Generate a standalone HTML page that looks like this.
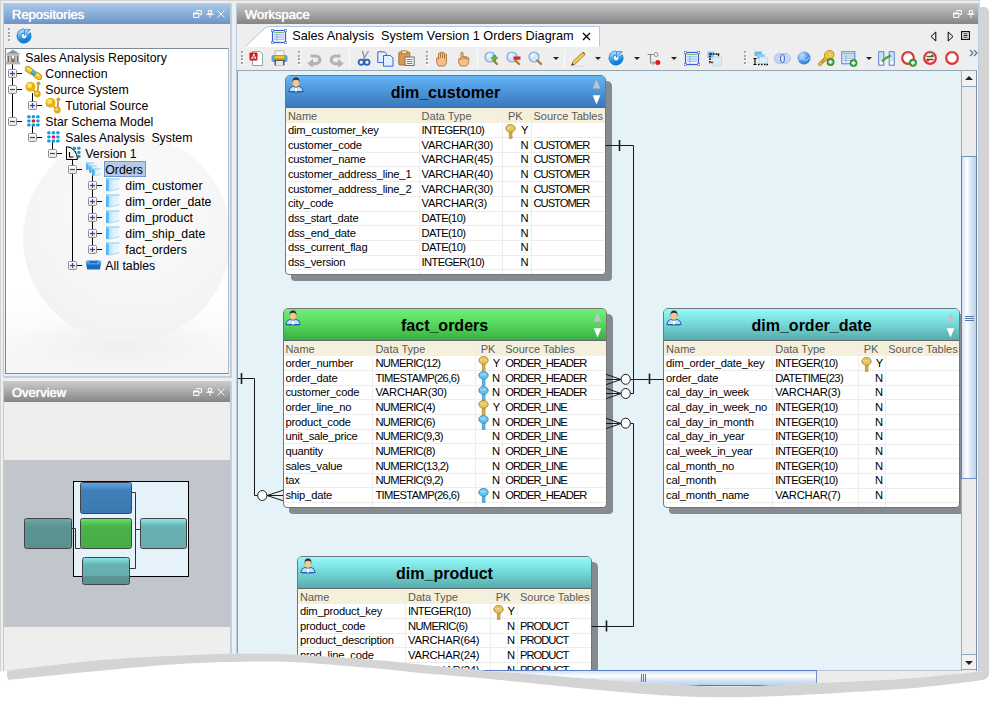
<!DOCTYPE html><html><head><meta charset="utf-8"><style>*{margin:0;padding:0;box-sizing:border-box}
html,body{width:996px;height:705px;overflow:hidden;background:#fff;font-family:"Liberation Sans",sans-serif;position:relative}
.a{position:absolute}
#frame{left:0;top:0;width:980px;height:700px;background:#eeeeee;border-left:1px solid #d4d4d4;border-top:1px solid #d4d4d4;border-right:1px solid #d4d4d4}
#rshadow{left:980px;top:7px;width:8.5px;height:670px;background:#d4d4d4;border-top-right-radius:5px}
.phead{position:absolute;left:0;top:0;right:0;height:20px;color:#fff;font-size:13px;line-height:21px;padding-left:8px;text-shadow:0 0 1px rgba(255,255,255,.9),0 0 1px rgba(255,255,255,.6)}
#repo{left:3px;top:3px;width:228px;height:374px;border:1px solid #b8cce4;background:#eeeeee;box-shadow:1px 1px 0 #cfcfcf}
#repo .phead{background:linear-gradient(#a9c6e8,#6b95c6)}
#tree{left:0.8px;top:44px;width:224.5px;height:326px;background:#fff;border:1px solid #7d8a98;border-right-color:#b0bcc8;overflow:hidden}
#ov{left:3px;top:381px;width:228px;height:300px;border:1px solid #b8cce4;background:#eeeeee;box-shadow:1px 1px 0 #cfcfcf}
#ov .phead{background:linear-gradient(#cacaca,#858585)}
#ws{left:236px;top:3px;width:743px;height:690px;border:1px solid #b8cce4;background:#eeeeee}
#ws .phead{background:linear-gradient(#c6c6c6,#848484)}
.tr{position:absolute;font-size:12.3px;color:#000;line-height:16px;white-space:pre}
#canvasbg{left:237px;top:70px;width:724px;height:600px;background:#e5f2f8;border-top:1px solid #98a6b4;border-left:1px solid #8e9cb0}
#cv{position:absolute;left:0;top:0;width:996px;height:705px;clip-path:inset(71px 35px 35px 238px)}
.tbl{position:absolute;background:#fff;border:1px solid #767676;border-radius:5px 5px 4px 4px;box-shadow:6px 6px 0 #858b90;font-size:11px;overflow:visible}
.th{position:absolute;left:0;right:0;top:0;border-radius:4px 4px 0 0;border-bottom:1px solid #5e6a70;font-weight:bold;font-size:16px;text-align:center;color:#000}
.ch{position:absolute;left:0;right:0;background:#f5f0dc;color:#5a5a5a;font-size:11px}
.row{position:absolute;left:0;right:0;height:14.67px;border-bottom:1px solid #ededed;font-size:11.2px;letter-spacing:-0.2px;color:#000;white-space:nowrap}
.c{position:absolute;top:-0.4px;line-height:14.67px}
.u1{letter-spacing:-0.65px}
.u1v{letter-spacing:-0.22px}
.u2{letter-spacing:-1px}
.pk{text-align:right}
.key{display:block}
.vl{position:absolute;width:1px;background:#ededed}
.person{position:absolute;left:1.8px;top:0.8px;width:16px;height:16px;line-height:0}
.up{position:absolute;right:4.5px;top:3.5px;width:0;height:0;border-left:3.5px solid transparent;border-right:3.5px solid transparent;border-bottom:9px solid #c2c6ca}
.dn{position:absolute;right:4.5px;top:19.5px;width:0;height:0;border-left:3.5px solid transparent;border-right:3.5px solid transparent;border-top:9px solid #fff}
.exp{position:absolute;width:9px;height:9px;border:1px solid #8e8e8e;border-radius:1.5px;background:linear-gradient(#ffffff,#e4e4e4);}
.exp svg{position:absolute;left:-1px;top:-1px}
.tl{position:absolute;background:#000}
.ti{position:absolute;line-height:0}
.ti svg{display:block}
.sel{position:absolute;background:#b6c9e6;border:1px solid #7097d0}
#globe{left:17.5px;top:85px;width:208px;height:208px;border-radius:50%;background:radial-gradient(circle at 55% 35%,#fbfbfb 0%,#f6f6f6 50%,#f0f0f0 90%,#ededed 100%)}
.sbtn{background:linear-gradient(90deg,#f6f6f6,#e0e0e0);border:1px solid #b4b4b4}

.ch .c.h{top:1px;line-height:inherit}

.ovb{border:1.2px solid #444;border-radius:2.5px}

.up2{position:absolute;right:4px;top:3.3px}
</style></head><body><div id="frame" class="a"></div>
<div id="rshadow" class="a"></div>
<div id="repo" class="a">
  <div class="phead">Repositories</div>
  <div id="tree" class="a"><div class="a" style="left:0;top:0;width:225px;height:327px;background:linear-gradient(#ffffff,#ffffff 75%,#f4f4f4)"></div><div class="a" style="left:0px;top:270px;width:225px;height:50px;border-radius:50%;background:radial-gradient(closest-side,#efefef,rgba(250,250,250,0))"></div><div id="globe" class="a"></div></div>
</div>
<div id="ov" class="a">
  <div class="phead">Overview</div>
</div>
<div id="ws" class="a">
  <div class="phead">Workspace</div>
</div>
<div id="canvasbg" class="a"></div>
<div class="tl" style="left:12.0px;top:64.0px;width:1px;height:57.3px"></div><div class="tl" style="left:32.0px;top:93.3px;width:1px;height:12.0px"></div><div class="tl" style="left:32.0px;top:125.3px;width:1px;height:12.0px"></div><div class="tl" style="left:52.0px;top:141.3px;width:1px;height:12.0px"></div><div class="tl" style="left:72.0px;top:159.3px;width:1px;height:106.0px"></div><div class="tl" style="left:92.0px;top:175.3px;width:1px;height:74.0px"></div><div class="ti" style="left:5.0px;top:49.3px"><svg width="16" height="16" viewBox="0 0 16 16"><path d="M8 0.8L15.2 5H0.8Z" fill="#8c8c8c" stroke="#d0d0d0" stroke-width="0.8"/><rect x="1.5" y="5" width="13" height="1.6" fill="#bdbdbd"/><rect x="2.4" y="6.6" width="2" height="6.4" fill="#6c6c6c"/><rect x="5.4" y="6.6" width="1.6" height="6.4" fill="#8a8a8a"/><rect x="9" y="6.6" width="1.6" height="6.4" fill="#8a8a8a"/><rect x="11.6" y="6.6" width="2" height="6.4" fill="#6c6c6c"/><rect x="7.2" y="9.5" width="1.6" height="3.5" fill="#8a4018"/><rect x="0.8" y="13" width="14.4" height="2.4" fill="#b4b4b4"/></svg></div><div class="tr" style="left:25.3px;top:50.1px">Sales Analysis Repository</div><div class="tl" style="left:16.5px;top:73.3px;width:5.0px;height:1px"></div><div class="exp" style="left:8.0px;top:68.8px"><svg width="9" height="9" viewBox="0 0 9 9"><path d="M2 4.5H7" stroke="#2c4a9a" stroke-width="1.2"/><path d="M4.5 2V7" stroke="#2c4a9a" stroke-width="1.2"/></svg></div><div class="ti" style="left:24.5px;top:66.3px"><svg width="17" height="14" viewBox="0 0 17 14"><path d="M2.8 3L6.6 5.7M10.4 8.3L14.2 11" stroke="#b88808" stroke-width="6" stroke-linecap="round"/><path d="M2.8 3L6.6 5.7M10.4 8.3L14.2 11" stroke="#f4c820" stroke-width="4.6" stroke-linecap="round"/><path d="M2.6 1.9L6.4 4.6M10.2 7.2L14 9.9" stroke="#fff0a0" stroke-width="1.1" stroke-linecap="round"/><path d="M6.4 5.6L10.6 8.4" stroke="#1890c8" stroke-width="3.6"/><path d="M6.6 5.2L10.4 7.8" stroke="#50c8f0" stroke-width="1.6"/></svg></div><div class="tr" style="left:45.3px;top:66.1px">Connection</div><div class="tl" style="left:16.5px;top:89.3px;width:5.0px;height:1px"></div><div class="exp" style="left:8.0px;top:84.8px"><svg width="9" height="9" viewBox="0 0 9 9"><path d="M2 4.5H7" stroke="#2c4a9a" stroke-width="1.2"/></svg></div><div class="ti" style="left:24.5px;top:80.8px"><svg width="17" height="17" viewBox="0 0 17 17"><path d="M5.5 6L12 13M12.5 13L13.3 3" stroke="#b88a30" stroke-width="1.6"/><circle cx="5.5" cy="5.8" r="5" fill="#e8b418"/><circle cx="4.5" cy="4.5" r="2.5" fill="#fbe27a"/><circle cx="12.3" cy="13" r="3.4" fill="#e0aa18"/><circle cx="11.6" cy="12.2" r="1.5" fill="#f8d860"/><circle cx="13.4" cy="2.6" r="2" fill="#d4a030"/></svg></div><div class="tr" style="left:45.3px;top:82.1px">Source System</div><div class="tl" style="left:36.5px;top:105.3px;width:5.0px;height:1px"></div><div class="exp" style="left:28.0px;top:100.8px"><svg width="9" height="9" viewBox="0 0 9 9"><path d="M2 4.5H7" stroke="#2c4a9a" stroke-width="1.2"/><path d="M4.5 2V7" stroke="#2c4a9a" stroke-width="1.2"/></svg></div><div class="ti" style="left:44.5px;top:96.8px"><svg width="17" height="17" viewBox="0 0 17 17"><path d="M5.5 6L12 13M12.5 13L13.3 3" stroke="#b88a30" stroke-width="1.6"/><circle cx="5.5" cy="5.8" r="5" fill="#e8b418"/><circle cx="4.5" cy="4.5" r="2.5" fill="#fbe27a"/><circle cx="12.3" cy="13" r="3.4" fill="#e0aa18"/><circle cx="11.6" cy="12.2" r="1.5" fill="#f8d860"/><circle cx="13.4" cy="2.6" r="2" fill="#d4a030"/></svg></div><div class="tr" style="left:65.3px;top:98.1px">Tutorial Source</div><div class="tl" style="left:16.5px;top:121.3px;width:5.0px;height:1px"></div><div class="exp" style="left:8.0px;top:116.8px"><svg width="9" height="9" viewBox="0 0 9 9"><path d="M2 4.5H7" stroke="#2c4a9a" stroke-width="1.2"/></svg></div><div class="ti" style="left:26.5px;top:115.3px"><svg width="13" height="12" viewBox="0 0 13 12"><rect x="0.2" y="0.3" width="3.4" height="3" rx="1.1" fill="#1496e6"/><rect x="4.7" y="0.3" width="3.4" height="3" rx="1.1" fill="#1496e6"/><rect x="9.2" y="0.3" width="3.4" height="3" rx="1.1" fill="#1496e6"/><rect x="0.2" y="4.4" width="3.4" height="3" rx="1.1" fill="#1496e6"/><rect x="4.7" y="4.4" width="3.4" height="3" rx="1.1" fill="#e01818"/><rect x="9.2" y="4.4" width="3.4" height="3" rx="1.1" fill="#1496e6"/><rect x="0.2" y="8.5" width="3.4" height="3" rx="1.1" fill="#1496e6"/><rect x="4.7" y="8.5" width="3.4" height="3" rx="1.1" fill="#1496e6"/><rect x="9.2" y="8.5" width="3.4" height="3" rx="1.1" fill="#1496e6"/></svg></div><div class="tr" style="left:45.3px;top:114.1px">Star Schema Model</div><div class="tl" style="left:36.5px;top:137.3px;width:5.0px;height:1px"></div><div class="exp" style="left:28.0px;top:132.8px"><svg width="9" height="9" viewBox="0 0 9 9"><path d="M2 4.5H7" stroke="#2c4a9a" stroke-width="1.2"/></svg></div><div class="ti" style="left:46.5px;top:131.3px"><svg width="13" height="12" viewBox="0 0 13 12"><rect x="0.2" y="0.3" width="3.4" height="3" rx="1.1" fill="#1496e6"/><rect x="4.7" y="0.3" width="3.4" height="3" rx="1.1" fill="#1496e6"/><rect x="9.2" y="0.3" width="3.4" height="3" rx="1.1" fill="#1496e6"/><rect x="0.2" y="4.4" width="3.4" height="3" rx="1.1" fill="#1496e6"/><rect x="4.7" y="4.4" width="3.4" height="3" rx="1.1" fill="#e01818"/><rect x="9.2" y="4.4" width="3.4" height="3" rx="1.1" fill="#1496e6"/><rect x="0.2" y="8.5" width="3.4" height="3" rx="1.1" fill="#1496e6"/><rect x="4.7" y="8.5" width="3.4" height="3" rx="1.1" fill="#1496e6"/><rect x="9.2" y="8.5" width="3.4" height="3" rx="1.1" fill="#1496e6"/></svg></div><div class="tr" style="left:65.3px;top:130.1px">Sales Analysis  System</div><div class="tl" style="left:56.5px;top:153.3px;width:5.0px;height:1px"></div><div class="exp" style="left:48.0px;top:148.8px"><svg width="9" height="9" viewBox="0 0 9 9"><path d="M2 4.5H7" stroke="#2c4a9a" stroke-width="1.2"/></svg></div><div class="ti" style="left:65.5px;top:146.3px"><svg width="15" height="14" viewBox="0 0 15 14"><rect x="2.2" y="0.8" width="3.4" height="3" rx="1.1" fill="#1496e6"/><rect x="6.7" y="0.8" width="3.4" height="3" rx="1.1" fill="#1496e6"/><rect x="11.2" y="0.8" width="3.4" height="3" rx="1.1" fill="#1496e6"/><rect x="2.2" y="4.9" width="3.4" height="3" rx="1.1" fill="#1496e6"/><rect x="6.7" y="4.9" width="3.4" height="3" rx="1.1" fill="#e01818"/><rect x="11.2" y="4.9" width="3.4" height="3" rx="1.1" fill="#1496e6"/><rect x="2.2" y="9.0" width="3.4" height="3" rx="1.1" fill="#1496e6"/><rect x="6.7" y="9.0" width="3.4" height="3" rx="1.1" fill="#1496e6"/><rect x="11.2" y="9.0" width="3.4" height="3" rx="1.1" fill="#1496e6"/><path d="M0.5 0.7V13.5H11.5A11 12.8 0 0 0 0.5 0.7Z" fill="#f4f4f4" stroke="#000" stroke-width="1"/><path d="M3.5 6V11H7.5" stroke="#000" stroke-width="1.1" fill="none"/></svg></div><div class="tr" style="left:85.3px;top:146.1px">Version 1</div><div class="tl" style="left:76.5px;top:169.3px;width:5.0px;height:1px"></div><div class="exp" style="left:68.0px;top:164.8px"><svg width="9" height="9" viewBox="0 0 9 9"><path d="M2 4.5H7" stroke="#2c4a9a" stroke-width="1.2"/></svg></div><div class="ti" style="left:85.5px;top:162.3px"><svg width="15" height="14" viewBox="0 0 15 14"><defs><linearGradient id="pg" x1="0" y1="0" x2="1" y2="0"><stop offset="0" stop-color="#8ed2f8"/><stop offset="0.5" stop-color="#d8f0fc"/><stop offset="1" stop-color="#eef9fe"/></linearGradient><linearGradient id="pl" x1="0" y1="0" x2="1" y2="0"><stop offset="0" stop-color="#2aa0ea"/><stop offset="1" stop-color="#7acaf6"/></linearGradient></defs><g transform="translate(0.3 0.3)" opacity="1"><path d="M0 0H7.5V5.9L2.5 7.5H0Z" fill="url(#pg)"/><path d="M0 0H2.6V7.5H0Z" fill="url(#pl)"/><path d="M0 0H7.5V1.6H0Z" fill="#a8dcf8"/><path d="M2.5 7.5L7.5 5.9V6.7L2.5 8.1Z" fill="#a0c8e0"/></g><g transform="translate(3.3 3.3)" opacity="1"><path d="M0 0H7.5V5.9L2.5 7.5H0Z" fill="url(#pg)"/><path d="M0 0H2.6V7.5H0Z" fill="url(#pl)"/><path d="M0 0H7.5V1.6H0Z" fill="#a8dcf8"/><path d="M2.5 7.5L7.5 5.9V6.7L2.5 8.1Z" fill="#a0c8e0"/></g><g transform="translate(6.3 6)" opacity="1"><path d="M0 0H8V5.9L2.5 7.5H0Z" fill="url(#pg)"/><path d="M0 0H2.6V7.5H0Z" fill="url(#pl)"/><path d="M0 0H8V1.6H0Z" fill="#a8dcf8"/><path d="M2.5 7.5L8 5.9V6.7L2.5 8.1Z" fill="#a0c8e0"/></g></svg></div><div class="sel" style="left:104.0px;top:161.2px;width:41.6px;height:15.4px"></div><div class="tr" style="left:105.3px;top:162.1px">Orders</div><div class="tl" style="left:96.5px;top:185.3px;width:5.0px;height:1px"></div><div class="exp" style="left:88.0px;top:180.8px"><svg width="9" height="9" viewBox="0 0 9 9"><path d="M2 4.5H7" stroke="#2c4a9a" stroke-width="1.2"/><path d="M4.5 2V7" stroke="#2c4a9a" stroke-width="1.2"/></svg></div><div class="ti" style="left:106.0px;top:178.3px"><svg width="14" height="14" viewBox="0 0 14 14"><defs><linearGradient id="pg" x1="0" y1="0" x2="1" y2="0"><stop offset="0" stop-color="#8ed2f8"/><stop offset="0.5" stop-color="#d8f0fc"/><stop offset="1" stop-color="#eef9fe"/></linearGradient><linearGradient id="pl" x1="0" y1="0" x2="1" y2="0"><stop offset="0" stop-color="#2aa0ea"/><stop offset="1" stop-color="#7acaf6"/></linearGradient></defs><g transform="translate(0.3 0.3)" opacity="1"><path d="M0 0H13.2V10.0L2.5 12.8H0Z" fill="url(#pg)"/><path d="M0 0H2.6V12.8H0Z" fill="url(#pl)"/><path d="M0 0H13.2V1.6H0Z" fill="#a8dcf8"/><path d="M2.5 12.8L13.2 10.0V10.8L2.5 13.4Z" fill="#a0c8e0"/></g></svg></div><div class="tr" style="left:125.3px;top:178.1px">dim_customer</div><div class="tl" style="left:96.5px;top:201.3px;width:5.0px;height:1px"></div><div class="exp" style="left:88.0px;top:196.8px"><svg width="9" height="9" viewBox="0 0 9 9"><path d="M2 4.5H7" stroke="#2c4a9a" stroke-width="1.2"/><path d="M4.5 2V7" stroke="#2c4a9a" stroke-width="1.2"/></svg></div><div class="ti" style="left:106.0px;top:194.3px"><svg width="14" height="14" viewBox="0 0 14 14"><defs><linearGradient id="pg" x1="0" y1="0" x2="1" y2="0"><stop offset="0" stop-color="#8ed2f8"/><stop offset="0.5" stop-color="#d8f0fc"/><stop offset="1" stop-color="#eef9fe"/></linearGradient><linearGradient id="pl" x1="0" y1="0" x2="1" y2="0"><stop offset="0" stop-color="#2aa0ea"/><stop offset="1" stop-color="#7acaf6"/></linearGradient></defs><g transform="translate(0.3 0.3)" opacity="1"><path d="M0 0H13.2V10.0L2.5 12.8H0Z" fill="url(#pg)"/><path d="M0 0H2.6V12.8H0Z" fill="url(#pl)"/><path d="M0 0H13.2V1.6H0Z" fill="#a8dcf8"/><path d="M2.5 12.8L13.2 10.0V10.8L2.5 13.4Z" fill="#a0c8e0"/></g></svg></div><div class="tr" style="left:125.3px;top:194.1px">dim_order_date</div><div class="tl" style="left:96.5px;top:217.3px;width:5.0px;height:1px"></div><div class="exp" style="left:88.0px;top:212.8px"><svg width="9" height="9" viewBox="0 0 9 9"><path d="M2 4.5H7" stroke="#2c4a9a" stroke-width="1.2"/><path d="M4.5 2V7" stroke="#2c4a9a" stroke-width="1.2"/></svg></div><div class="ti" style="left:106.0px;top:210.3px"><svg width="14" height="14" viewBox="0 0 14 14"><defs><linearGradient id="pg" x1="0" y1="0" x2="1" y2="0"><stop offset="0" stop-color="#8ed2f8"/><stop offset="0.5" stop-color="#d8f0fc"/><stop offset="1" stop-color="#eef9fe"/></linearGradient><linearGradient id="pl" x1="0" y1="0" x2="1" y2="0"><stop offset="0" stop-color="#2aa0ea"/><stop offset="1" stop-color="#7acaf6"/></linearGradient></defs><g transform="translate(0.3 0.3)" opacity="1"><path d="M0 0H13.2V10.0L2.5 12.8H0Z" fill="url(#pg)"/><path d="M0 0H2.6V12.8H0Z" fill="url(#pl)"/><path d="M0 0H13.2V1.6H0Z" fill="#a8dcf8"/><path d="M2.5 12.8L13.2 10.0V10.8L2.5 13.4Z" fill="#a0c8e0"/></g></svg></div><div class="tr" style="left:125.3px;top:210.1px">dim_product</div><div class="tl" style="left:96.5px;top:233.3px;width:5.0px;height:1px"></div><div class="exp" style="left:88.0px;top:228.8px"><svg width="9" height="9" viewBox="0 0 9 9"><path d="M2 4.5H7" stroke="#2c4a9a" stroke-width="1.2"/><path d="M4.5 2V7" stroke="#2c4a9a" stroke-width="1.2"/></svg></div><div class="ti" style="left:106.0px;top:226.3px"><svg width="14" height="14" viewBox="0 0 14 14"><defs><linearGradient id="pg" x1="0" y1="0" x2="1" y2="0"><stop offset="0" stop-color="#8ed2f8"/><stop offset="0.5" stop-color="#d8f0fc"/><stop offset="1" stop-color="#eef9fe"/></linearGradient><linearGradient id="pl" x1="0" y1="0" x2="1" y2="0"><stop offset="0" stop-color="#2aa0ea"/><stop offset="1" stop-color="#7acaf6"/></linearGradient></defs><g transform="translate(0.3 0.3)" opacity="1"><path d="M0 0H13.2V10.0L2.5 12.8H0Z" fill="url(#pg)"/><path d="M0 0H2.6V12.8H0Z" fill="url(#pl)"/><path d="M0 0H13.2V1.6H0Z" fill="#a8dcf8"/><path d="M2.5 12.8L13.2 10.0V10.8L2.5 13.4Z" fill="#a0c8e0"/></g></svg></div><div class="tr" style="left:125.3px;top:226.1px">dim_ship_date</div><div class="tl" style="left:96.5px;top:249.3px;width:5.0px;height:1px"></div><div class="exp" style="left:88.0px;top:244.8px"><svg width="9" height="9" viewBox="0 0 9 9"><path d="M2 4.5H7" stroke="#2c4a9a" stroke-width="1.2"/><path d="M4.5 2V7" stroke="#2c4a9a" stroke-width="1.2"/></svg></div><div class="ti" style="left:106.0px;top:242.3px"><svg width="14" height="14" viewBox="0 0 14 14"><defs><linearGradient id="pg" x1="0" y1="0" x2="1" y2="0"><stop offset="0" stop-color="#8ed2f8"/><stop offset="0.5" stop-color="#d8f0fc"/><stop offset="1" stop-color="#eef9fe"/></linearGradient><linearGradient id="pl" x1="0" y1="0" x2="1" y2="0"><stop offset="0" stop-color="#2aa0ea"/><stop offset="1" stop-color="#7acaf6"/></linearGradient></defs><g transform="translate(0.3 0.3)" opacity="1"><path d="M0 0H13.2V10.0L2.5 12.8H0Z" fill="url(#pg)"/><path d="M0 0H2.6V12.8H0Z" fill="url(#pl)"/><path d="M0 0H13.2V1.6H0Z" fill="#a8dcf8"/><path d="M2.5 12.8L13.2 10.0V10.8L2.5 13.4Z" fill="#a0c8e0"/></g></svg></div><div class="tr" style="left:125.3px;top:242.1px">fact_orders</div><div class="tl" style="left:76.5px;top:265.3px;width:5.0px;height:1px"></div><div class="exp" style="left:68.0px;top:260.8px"><svg width="9" height="9" viewBox="0 0 9 9"><path d="M2 4.5H7" stroke="#2c4a9a" stroke-width="1.2"/><path d="M4.5 2V7" stroke="#2c4a9a" stroke-width="1.2"/></svg></div><div class="ti" style="left:84.5px;top:260.3px"><svg width="17" height="10" viewBox="0 0 17 10"><path d="M1 2.5H16L15 9.5H2Z" fill="#1a6cc0"/><path d="M1 2.5H16V4.5L8.5 5.5L1 4.5Z" fill="#2a86d8"/><path d="M0.3 1.8L2.5 0.3H14.5L16.7 1.8L14 3.8H3Z" fill="#5aaaf0"/><path d="M3.5 1.6H13.5L12 2.8H5Z" fill="#0c4c90"/></svg></div><div class="tr" style="left:105.3px;top:258.1px">All tables</div><div id="cv"><div class="tbl" style="left:285.1px;top:75.0px;width:320.7px;height:200.0px"><div class="th" style="height:31.8px;background:linear-gradient(#64b4f6,#4a92d6 55%,#3a78bc);line-height:33.1px">dim_customer</div><div class="person"><svg width="16" height="16" viewBox="0 0 16 16"><ellipse cx="8" cy="14.6" rx="7.6" ry="1.2" fill="#1a3a60" opacity="0.45"/><path d="M0.8 14.5Q1.2 10.2 5.2 9.2L8 10.8L10.8 9.2Q14.8 10.2 15.2 14.5Z" fill="#c4e0f6" stroke="#1e62b0" stroke-width="1"/><path d="M7 10.5H9V14.5H7Z" fill="#fff"/><path d="M6.6 8V9.4L8 10.6L9.4 9.4V8Z" fill="#e0a060"/><ellipse cx="8" cy="5.6" rx="3.4" ry="3.6" fill="#f6c890"/><ellipse cx="4.7" cy="5.8" rx="0.8" ry="1.1" fill="#e8a868"/><ellipse cx="11.3" cy="5.8" rx="0.8" ry="1.1" fill="#e8a868"/><path d="M4.6 5.2Q4.2 0.4 8 0.4Q11.8 0.4 11.4 5.2Q10.8 2.6 8 2.8Q5.2 2.6 4.6 5.2Z" fill="#2a2a38"/></svg></div><svg class="up2" width="9" height="26" viewBox="0 0 9 26"><path d="M4.5 0.3L8.3 9.5H0.7Z" fill="#c0c4c8"/><path d="M0.7 16.3H8.3L4.5 25.5Z" fill="#fff"/></svg><div class="ch" style="top:31.8px;height:15.7px;line-height:15.7px"><span class="c h" style="left:1.8px">Name</span><span class="c h" style="left:135.5px">Data Type</span><span class="c h" style="left:221.9px">PK</span><span class="c h" style="left:247.4px">Source Tables</span></div><div class="row" style="top:47.50px"><span class="c" style="left:1.8px">dim_customer_key</span><span class="c u1" style="left:135.5px">INTEGER(10)</span><span class="c" style="left:219.4px;top:0px"><svg class="key" width="11" height="15" viewBox="0 0 11 15"><path d="M4.4 7.5V14.6H6.4L7.4 13.8L6.6 13L7.4 12.2L6.6 11.4L7.4 10.6L6.6 9.8L7.2 9V7.5Z" fill="#d8ae48" stroke="#9a7420" stroke-width="0.6"/><ellipse cx="5.5" cy="4.3" rx="4.7" ry="3.9" fill="#ecc058" stroke="#a88020" stroke-width="0.8"/><ellipse cx="5.3" cy="3.4" rx="3" ry="1.6" fill="#f8e090"/><rect x="3.6" y="2.6" width="3.8" height="1.4" rx="0.7" fill="#fffbe8" stroke="#a88020" stroke-width="0.5"/></svg></span><span class="c pk" style="left:215.9px;width:26.3px">Y</span><span class="c u2" style="left:247.4px"></span></div><div class="row" style="top:62.17px"><span class="c" style="left:1.8px">customer_code</span><span class="c u1v" style="left:135.5px">VARCHAR(30)</span><span class="c pk" style="left:215.9px;width:26.3px">N</span><span class="c u2" style="left:247.4px">CUSTOMER</span></div><div class="row" style="top:76.84px"><span class="c" style="left:1.8px">customer_name</span><span class="c u1v" style="left:135.5px">VARCHAR(45)</span><span class="c pk" style="left:215.9px;width:26.3px">N</span><span class="c u2" style="left:247.4px">CUSTOMER</span></div><div class="row" style="top:91.51px"><span class="c" style="left:1.8px">customer_address_line_1</span><span class="c u1v" style="left:135.5px">VARCHAR(40)</span><span class="c pk" style="left:215.9px;width:26.3px">N</span><span class="c u2" style="left:247.4px">CUSTOMER</span></div><div class="row" style="top:106.18px"><span class="c" style="left:1.8px">customer_address_line_2</span><span class="c u1v" style="left:135.5px">VARCHAR(30)</span><span class="c pk" style="left:215.9px;width:26.3px">N</span><span class="c u2" style="left:247.4px">CUSTOMER</span></div><div class="row" style="top:120.85px"><span class="c" style="left:1.8px">city_code</span><span class="c u1v" style="left:135.5px">VARCHAR(3)</span><span class="c pk" style="left:215.9px;width:26.3px">N</span><span class="c u2" style="left:247.4px">CUSTOMER</span></div><div class="row" style="top:135.52px"><span class="c" style="left:1.8px">dss_start_date</span><span class="c u1" style="left:135.5px">DATE(10)</span><span class="c pk" style="left:215.9px;width:26.3px">N</span><span class="c u2" style="left:247.4px"></span></div><div class="row" style="top:150.19px"><span class="c" style="left:1.8px">dss_end_date</span><span class="c u1" style="left:135.5px">DATE(10)</span><span class="c pk" style="left:215.9px;width:26.3px">N</span><span class="c u2" style="left:247.4px"></span></div><div class="row" style="top:164.86px"><span class="c" style="left:1.8px">dss_current_flag</span><span class="c u1" style="left:135.5px">DATE(10)</span><span class="c pk" style="left:215.9px;width:26.3px">N</span><span class="c u2" style="left:247.4px"></span></div><div class="row" style="top:179.53px"><span class="c" style="left:1.8px">dss_version</span><span class="c u1" style="left:135.5px">INTEGER(10)</span><span class="c pk" style="left:215.9px;width:26.3px">N</span><span class="c u2" style="left:247.4px"></span></div><div class="vl" style="left:132.5px;top:31.8px;bottom:0"></div><div class="vl" style="left:215.9px;top:31.8px;bottom:0"></div><div class="vl" style="left:244.7px;top:31.8px;bottom:0"></div></div><div class="tbl" style="left:282.6px;top:307.9px;width:324.0px;height:200.1px"><div class="th" style="height:31.8px;background:linear-gradient(#72f07a,#52d45a 55%,#38ae40);line-height:33.1px">fact_orders</div><div class="person"><svg width="16" height="16" viewBox="0 0 16 16"><ellipse cx="8" cy="14.6" rx="7.6" ry="1.2" fill="#1a3a60" opacity="0.45"/><path d="M0.8 14.5Q1.2 10.2 5.2 9.2L8 10.8L10.8 9.2Q14.8 10.2 15.2 14.5Z" fill="#c4e0f6" stroke="#1e62b0" stroke-width="1"/><path d="M7 10.5H9V14.5H7Z" fill="#fff"/><path d="M6.6 8V9.4L8 10.6L9.4 9.4V8Z" fill="#e0a060"/><ellipse cx="8" cy="5.6" rx="3.4" ry="3.6" fill="#f6c890"/><ellipse cx="4.7" cy="5.8" rx="0.8" ry="1.1" fill="#e8a868"/><ellipse cx="11.3" cy="5.8" rx="0.8" ry="1.1" fill="#e8a868"/><path d="M4.6 5.2Q4.2 0.4 8 0.4Q11.8 0.4 11.4 5.2Q10.8 2.6 8 2.8Q5.2 2.6 4.6 5.2Z" fill="#2a2a38"/></svg></div><svg class="up2" width="9" height="26" viewBox="0 0 9 26"><path d="M4.5 0.3L8.3 9.5H0.7Z" fill="#c0c4c8"/><path d="M0.7 16.3H8.3L4.5 25.5Z" fill="#fff"/></svg><div class="ch" style="top:31.8px;height:15.7px;line-height:15.7px"><span class="c h" style="left:1.8px">Name</span><span class="c h" style="left:91.8px">Data Type</span><span class="c h" style="left:197.2px">PK</span><span class="c h" style="left:221.6px">Source Tables</span></div><div class="row" style="top:47.50px"><span class="c" style="left:1.8px">order_number</span><span class="c u1" style="left:91.8px">NUMERIC(12)</span><span class="c" style="left:194.7px;top:0px"><svg class="key" width="11" height="15" viewBox="0 0 11 15"><path d="M4.4 7.5V14.6H6.4L7.4 13.8L6.6 13L7.4 12.2L6.6 11.4L7.4 10.6L6.6 9.8L7.2 9V7.5Z" fill="#d8ae48" stroke="#9a7420" stroke-width="0.6"/><ellipse cx="5.5" cy="4.3" rx="4.7" ry="3.9" fill="#ecc058" stroke="#a88020" stroke-width="0.8"/><ellipse cx="5.3" cy="3.4" rx="3" ry="1.6" fill="#f8e090"/><rect x="3.6" y="2.6" width="3.8" height="1.4" rx="0.7" fill="#fffbe8" stroke="#a88020" stroke-width="0.5"/></svg></span><span class="c pk" style="left:191.2px;width:25.2px">Y</span><span class="c u2" style="left:221.6px">ORDER_HEADER</span></div><div class="row" style="top:62.17px"><span class="c" style="left:1.8px">order_date</span><span class="c u1" style="left:91.8px">TIMESTAMP(26,6)</span><span class="c" style="left:194.7px;top:0px"><svg class="key" width="11" height="15" viewBox="0 0 11 15"><path d="M4.4 7.5V14.6H6.4L7.4 13.8L6.6 13L7.4 12.2L6.6 11.4L7.4 10.6L6.6 9.8L7.2 9V7.5Z" fill="#58b8e4" stroke="#2a7ab0" stroke-width="0.6"/><ellipse cx="5.5" cy="4.3" rx="4.7" ry="3.9" fill="#62c2ee" stroke="#2a80b8" stroke-width="0.8"/><ellipse cx="5.3" cy="3.4" rx="3" ry="1.6" fill="#a8e2fa"/><rect x="3.6" y="2.6" width="3.8" height="1.4" rx="0.7" fill="#f0faff" stroke="#2a80b8" stroke-width="0.5"/></svg></span><span class="c pk" style="left:191.2px;width:25.2px">N</span><span class="c u2" style="left:221.6px">ORDER_HEADER</span></div><div class="row" style="top:76.84px"><span class="c" style="left:1.8px">customer_code</span><span class="c u1v" style="left:91.8px">VARCHAR(30)</span><span class="c" style="left:194.7px;top:0px"><svg class="key" width="11" height="15" viewBox="0 0 11 15"><path d="M4.4 7.5V14.6H6.4L7.4 13.8L6.6 13L7.4 12.2L6.6 11.4L7.4 10.6L6.6 9.8L7.2 9V7.5Z" fill="#58b8e4" stroke="#2a7ab0" stroke-width="0.6"/><ellipse cx="5.5" cy="4.3" rx="4.7" ry="3.9" fill="#62c2ee" stroke="#2a80b8" stroke-width="0.8"/><ellipse cx="5.3" cy="3.4" rx="3" ry="1.6" fill="#a8e2fa"/><rect x="3.6" y="2.6" width="3.8" height="1.4" rx="0.7" fill="#f0faff" stroke="#2a80b8" stroke-width="0.5"/></svg></span><span class="c pk" style="left:191.2px;width:25.2px">N</span><span class="c u2" style="left:221.6px">ORDER_HEADER</span></div><div class="row" style="top:91.51px"><span class="c" style="left:1.8px">order_line_no</span><span class="c u1" style="left:91.8px">NUMERIC(4)</span><span class="c" style="left:194.7px;top:0px"><svg class="key" width="11" height="15" viewBox="0 0 11 15"><path d="M4.4 7.5V14.6H6.4L7.4 13.8L6.6 13L7.4 12.2L6.6 11.4L7.4 10.6L6.6 9.8L7.2 9V7.5Z" fill="#d8ae48" stroke="#9a7420" stroke-width="0.6"/><ellipse cx="5.5" cy="4.3" rx="4.7" ry="3.9" fill="#ecc058" stroke="#a88020" stroke-width="0.8"/><ellipse cx="5.3" cy="3.4" rx="3" ry="1.6" fill="#f8e090"/><rect x="3.6" y="2.6" width="3.8" height="1.4" rx="0.7" fill="#fffbe8" stroke="#a88020" stroke-width="0.5"/></svg></span><span class="c pk" style="left:191.2px;width:25.2px">Y</span><span class="c u2" style="left:221.6px">ORDER_LINE</span></div><div class="row" style="top:106.18px"><span class="c" style="left:1.8px">product_code</span><span class="c u1" style="left:91.8px">NUMERIC(6)</span><span class="c" style="left:194.7px;top:0px"><svg class="key" width="11" height="15" viewBox="0 0 11 15"><path d="M4.4 7.5V14.6H6.4L7.4 13.8L6.6 13L7.4 12.2L6.6 11.4L7.4 10.6L6.6 9.8L7.2 9V7.5Z" fill="#58b8e4" stroke="#2a7ab0" stroke-width="0.6"/><ellipse cx="5.5" cy="4.3" rx="4.7" ry="3.9" fill="#62c2ee" stroke="#2a80b8" stroke-width="0.8"/><ellipse cx="5.3" cy="3.4" rx="3" ry="1.6" fill="#a8e2fa"/><rect x="3.6" y="2.6" width="3.8" height="1.4" rx="0.7" fill="#f0faff" stroke="#2a80b8" stroke-width="0.5"/></svg></span><span class="c pk" style="left:191.2px;width:25.2px">N</span><span class="c u2" style="left:221.6px">ORDER_LINE</span></div><div class="row" style="top:120.85px"><span class="c" style="left:1.8px">unit_sale_price</span><span class="c u1" style="left:91.8px">NUMERIC(9,3)</span><span class="c pk" style="left:191.2px;width:25.2px">N</span><span class="c u2" style="left:221.6px">ORDER_LINE</span></div><div class="row" style="top:135.52px"><span class="c" style="left:1.8px">quantity</span><span class="c u1" style="left:91.8px">NUMERIC(8)</span><span class="c pk" style="left:191.2px;width:25.2px">N</span><span class="c u2" style="left:221.6px">ORDER_LINE</span></div><div class="row" style="top:150.19px"><span class="c" style="left:1.8px">sales_value</span><span class="c u1" style="left:91.8px">NUMERIC(13,2)</span><span class="c pk" style="left:191.2px;width:25.2px">N</span><span class="c u2" style="left:221.6px">ORDER_LINE</span></div><div class="row" style="top:164.86px"><span class="c" style="left:1.8px">tax</span><span class="c u1" style="left:91.8px">NUMERIC(9,2)</span><span class="c pk" style="left:191.2px;width:25.2px">N</span><span class="c u2" style="left:221.6px">ORDER_LINE</span></div><div class="row" style="top:179.53px"><span class="c" style="left:1.8px">ship_date</span><span class="c u1" style="left:91.8px">TIMESTAMP(26,6)</span><span class="c" style="left:194.7px;top:0px"><svg class="key" width="11" height="15" viewBox="0 0 11 15"><path d="M4.4 7.5V14.6H6.4L7.4 13.8L6.6 13L7.4 12.2L6.6 11.4L7.4 10.6L6.6 9.8L7.2 9V7.5Z" fill="#58b8e4" stroke="#2a7ab0" stroke-width="0.6"/><ellipse cx="5.5" cy="4.3" rx="4.7" ry="3.9" fill="#62c2ee" stroke="#2a80b8" stroke-width="0.8"/><ellipse cx="5.3" cy="3.4" rx="3" ry="1.6" fill="#a8e2fa"/><rect x="3.6" y="2.6" width="3.8" height="1.4" rx="0.7" fill="#f0faff" stroke="#2a80b8" stroke-width="0.5"/></svg></span><span class="c pk" style="left:191.2px;width:25.2px">N</span><span class="c u2" style="left:221.6px">ORDER_HEADER</span></div><div class="vl" style="left:88.8px;top:31.8px;bottom:0"></div><div class="vl" style="left:191.2px;top:31.8px;bottom:0"></div><div class="vl" style="left:218.9px;top:31.8px;bottom:0"></div></div><div class="tbl" style="left:663.3px;top:308.0px;width:296.5px;height:200.0px"><div class="th" style="height:31.8px;background:linear-gradient(#92fafa,#74d6d6 50%,#58acac);line-height:33.1px">dim_order_date</div><div class="person"><svg width="16" height="16" viewBox="0 0 16 16"><ellipse cx="8" cy="14.6" rx="7.6" ry="1.2" fill="#1a3a60" opacity="0.45"/><path d="M0.8 14.5Q1.2 10.2 5.2 9.2L8 10.8L10.8 9.2Q14.8 10.2 15.2 14.5Z" fill="#c4e0f6" stroke="#1e62b0" stroke-width="1"/><path d="M7 10.5H9V14.5H7Z" fill="#fff"/><path d="M6.6 8V9.4L8 10.6L9.4 9.4V8Z" fill="#e0a060"/><ellipse cx="8" cy="5.6" rx="3.4" ry="3.6" fill="#f6c890"/><ellipse cx="4.7" cy="5.8" rx="0.8" ry="1.1" fill="#e8a868"/><ellipse cx="11.3" cy="5.8" rx="0.8" ry="1.1" fill="#e8a868"/><path d="M4.6 5.2Q4.2 0.4 8 0.4Q11.8 0.4 11.4 5.2Q10.8 2.6 8 2.8Q5.2 2.6 4.6 5.2Z" fill="#2a2a38"/></svg></div><svg class="up2" width="9" height="26" viewBox="0 0 9 26"><path d="M4.5 0.3L8.3 9.5H0.7Z" fill="#c0c4c8"/><path d="M0.7 16.3H8.3L4.5 25.5Z" fill="#fff"/></svg><div class="ch" style="top:31.8px;height:15.7px;line-height:15.7px"><span class="c h" style="left:1.8px">Name</span><span class="c h" style="left:110.9px">Data Type</span><span class="c h" style="left:199.4px">PK</span><span class="c h" style="left:223.9px">Source Tables</span></div><div class="row" style="top:47.50px"><span class="c" style="left:1.8px">dim_order_date_key</span><span class="c u1" style="left:110.9px">INTEGER(10)</span><span class="c" style="left:196.9px;top:0px"><svg class="key" width="11" height="15" viewBox="0 0 11 15"><path d="M4.4 7.5V14.6H6.4L7.4 13.8L6.6 13L7.4 12.2L6.6 11.4L7.4 10.6L6.6 9.8L7.2 9V7.5Z" fill="#d8ae48" stroke="#9a7420" stroke-width="0.6"/><ellipse cx="5.5" cy="4.3" rx="4.7" ry="3.9" fill="#ecc058" stroke="#a88020" stroke-width="0.8"/><ellipse cx="5.3" cy="3.4" rx="3" ry="1.6" fill="#f8e090"/><rect x="3.6" y="2.6" width="3.8" height="1.4" rx="0.7" fill="#fffbe8" stroke="#a88020" stroke-width="0.5"/></svg></span><span class="c pk" style="left:193.4px;width:25.3px">Y</span><span class="c u2" style="left:223.9px"></span></div><div class="row" style="top:62.17px"><span class="c" style="left:1.8px">order_date</span><span class="c u1" style="left:110.9px">DATETIME(23)</span><span class="c pk" style="left:193.4px;width:25.3px">N</span><span class="c u2" style="left:223.9px"></span></div><div class="row" style="top:76.84px"><span class="c" style="left:1.8px">cal_day_in_week</span><span class="c u1v" style="left:110.9px">VARCHAR(3)</span><span class="c pk" style="left:193.4px;width:25.3px">N</span><span class="c u2" style="left:223.9px"></span></div><div class="row" style="top:91.51px"><span class="c" style="left:1.8px">cal_day_in_week_no</span><span class="c u1" style="left:110.9px">INTEGER(10)</span><span class="c pk" style="left:193.4px;width:25.3px">N</span><span class="c u2" style="left:223.9px"></span></div><div class="row" style="top:106.18px"><span class="c" style="left:1.8px">cal_day_in_month</span><span class="c u1" style="left:110.9px">INTEGER(10)</span><span class="c pk" style="left:193.4px;width:25.3px">N</span><span class="c u2" style="left:223.9px"></span></div><div class="row" style="top:120.85px"><span class="c" style="left:1.8px">cal_day_in_year</span><span class="c u1" style="left:110.9px">INTEGER(10)</span><span class="c pk" style="left:193.4px;width:25.3px">N</span><span class="c u2" style="left:223.9px"></span></div><div class="row" style="top:135.52px"><span class="c" style="left:1.8px">cal_week_in_year</span><span class="c u1" style="left:110.9px">INTEGER(10)</span><span class="c pk" style="left:193.4px;width:25.3px">N</span><span class="c u2" style="left:223.9px"></span></div><div class="row" style="top:150.19px"><span class="c" style="left:1.8px">cal_month_no</span><span class="c u1" style="left:110.9px">INTEGER(10)</span><span class="c pk" style="left:193.4px;width:25.3px">N</span><span class="c u2" style="left:223.9px"></span></div><div class="row" style="top:164.86px"><span class="c" style="left:1.8px">cal_month</span><span class="c u1" style="left:110.9px">INTEGER(10)</span><span class="c pk" style="left:193.4px;width:25.3px">N</span><span class="c u2" style="left:223.9px"></span></div><div class="row" style="top:179.53px"><span class="c" style="left:1.8px">cal_month_name</span><span class="c u1v" style="left:110.9px">VARCHAR(7)</span><span class="c pk" style="left:193.4px;width:25.3px">N</span><span class="c u2" style="left:223.9px"></span></div><div class="vl" style="left:107.9px;top:31.8px;bottom:0"></div><div class="vl" style="left:193.4px;top:31.8px;bottom:0"></div><div class="vl" style="left:221.2px;top:31.8px;bottom:0"></div></div><div class="tbl" style="left:297.2px;top:556.0px;width:294.6px;height:204.0px"><div class="th" style="height:31.8px;background:linear-gradient(#92fafa,#74d6d6 50%,#58acac);line-height:33.1px">dim_product</div><div class="person"><svg width="16" height="16" viewBox="0 0 16 16"><ellipse cx="8" cy="14.6" rx="7.6" ry="1.2" fill="#1a3a60" opacity="0.45"/><path d="M0.8 14.5Q1.2 10.2 5.2 9.2L8 10.8L10.8 9.2Q14.8 10.2 15.2 14.5Z" fill="#c4e0f6" stroke="#1e62b0" stroke-width="1"/><path d="M7 10.5H9V14.5H7Z" fill="#fff"/><path d="M6.6 8V9.4L8 10.6L9.4 9.4V8Z" fill="#e0a060"/><ellipse cx="8" cy="5.6" rx="3.4" ry="3.6" fill="#f6c890"/><ellipse cx="4.7" cy="5.8" rx="0.8" ry="1.1" fill="#e8a868"/><ellipse cx="11.3" cy="5.8" rx="0.8" ry="1.1" fill="#e8a868"/><path d="M4.6 5.2Q4.2 0.4 8 0.4Q11.8 0.4 11.4 5.2Q10.8 2.6 8 2.8Q5.2 2.6 4.6 5.2Z" fill="#2a2a38"/></svg></div><div class="ch" style="top:31.8px;height:15.7px;line-height:15.7px"><span class="c h" style="left:1.8px">Name</span><span class="c h" style="left:109.8px">Data Type</span><span class="c h" style="left:197.6px">PK</span><span class="c h" style="left:221.8px">Source Tables</span></div><div class="row" style="top:47.50px"><span class="c" style="left:1.8px">dim_product_key</span><span class="c u1" style="left:109.8px">INTEGER(10)</span><span class="c" style="left:195.1px;top:0px"><svg class="key" width="11" height="15" viewBox="0 0 11 15"><path d="M4.4 7.5V14.6H6.4L7.4 13.8L6.6 13L7.4 12.2L6.6 11.4L7.4 10.6L6.6 9.8L7.2 9V7.5Z" fill="#d8ae48" stroke="#9a7420" stroke-width="0.6"/><ellipse cx="5.5" cy="4.3" rx="4.7" ry="3.9" fill="#ecc058" stroke="#a88020" stroke-width="0.8"/><ellipse cx="5.3" cy="3.4" rx="3" ry="1.6" fill="#f8e090"/><rect x="3.6" y="2.6" width="3.8" height="1.4" rx="0.7" fill="#fffbe8" stroke="#a88020" stroke-width="0.5"/></svg></span><span class="c pk" style="left:191.6px;width:25.0px">Y</span><span class="c u2" style="left:221.8px"></span></div><div class="row" style="top:62.17px"><span class="c" style="left:1.8px">product_code</span><span class="c u1" style="left:109.8px">NUMERIC(6)</span><span class="c pk" style="left:191.6px;width:25.0px">N</span><span class="c u2" style="left:221.8px">PRODUCT</span></div><div class="row" style="top:76.84px"><span class="c" style="left:1.8px">product_description</span><span class="c u1v" style="left:109.8px">VARCHAR(64)</span><span class="c pk" style="left:191.6px;width:25.0px">N</span><span class="c u2" style="left:221.8px">PRODUCT</span></div><div class="row" style="top:91.51px"><span class="c" style="left:1.8px">prod_line_code</span><span class="c u1v" style="left:109.8px">VARCHAR(24)</span><span class="c pk" style="left:191.6px;width:25.0px">N</span><span class="c u2" style="left:221.8px">PRODUCT</span></div><div class="row" style="top:106.18px"><span class="c" style="left:1.8px">prod_line_name</span><span class="c u1v" style="left:109.8px">VARCHAR(24)</span><span class="c pk" style="left:191.6px;width:25.0px">N</span><span class="c u2" style="left:221.8px">PRODUCT</span></div><div class="row" style="top:120.85px"><span class="c" style="left:1.8px">brand_code</span><span class="c u1v" style="left:109.8px">VARCHAR(24)</span><span class="c pk" style="left:191.6px;width:25.0px">N</span><span class="c u2" style="left:221.8px">PRODUCT</span></div><div class="vl" style="left:106.8px;top:31.8px;bottom:0"></div><div class="vl" style="left:191.6px;top:31.8px;bottom:0"></div><div class="vl" style="left:219.1px;top:31.8px;bottom:0"></div></div><svg class="a" style="left:0;top:0" width="996" height="705" viewBox="0 0 996 705">
<g stroke="#1a1a1a" stroke-width="1" fill="none">
 <path d="M605.5 145.5H633.5V393.5H630.5"/>
 <path d="M619.5 140V151" stroke-width="1.6"/>
 <path d="M630.5 379.5H663.5"/>
 <path d="M649.5 373.5V384" stroke-width="1.6"/>
 <path d="M630.5 423.5H633.5V626.5H591.5"/>
 <path d="M606.5 620.5V631.5" stroke-width="1.6"/>
 <path d="M606 374.3L621 379.5M606 379.5H621M606 384.7L621 379.5"/>
 <path d="M606 388.3L621 393.5M606 393.5H621M606 398.7L621 393.5"/>
 <path d="M606 418.3L621 423.5M606 423.5H621M606 428.7L621 423.5"/>
 <path d="M237 378.5H254.5V495.5H257.5"/>
 <path d="M241.5 373V384" stroke-width="1.6"/>
 <path d="M283 490.3L267 495.5M283 495.5H267M283 500.7L267 495.5"/>
</g>
<g stroke="#1a1a1a" stroke-width="1" fill="#fff">
 <ellipse cx="625.7" cy="379.3" rx="4.6" ry="5"/>
 <ellipse cx="625.7" cy="393.5" rx="4.6" ry="5"/>
 <ellipse cx="625.7" cy="423.2" rx="4.6" ry="5"/>
 <ellipse cx="262.3" cy="495.5" rx="4.6" ry="5"/>
</g>
</svg>
</div><svg class="a" style="left:217.0px;top:9.8px" width="8" height="8" viewBox="0 0 8 8"><path d="M0.5 0.5L7.5 7.5M7.5 0.5L0.5 7.5" stroke="#fff" stroke-width="0.9"/></svg><svg class="a" style="left:206.0px;top:9.8px" width="8" height="8" viewBox="0 0 8 8"><path d="M2.3 0.6H5.7V3.6H2.3Z" fill="none" stroke="#fff" stroke-width="1"/><path d="M0.3 4.3H7.7" stroke="#fff" stroke-width="1"/><path d="M4 4.3V7.8" stroke="#fff" stroke-width="1"/></svg><svg class="a" style="left:192.5px;top:9.8px" width="9" height="8" viewBox="0 0 9 8"><path d="M3.2 0.6H8.4V4.6H6.5" fill="none" stroke="#fff" stroke-width="1"/><path d="M0.6 3.1H5.9V7.4H0.6Z" fill="none" stroke="#fff" stroke-width="1"/><path d="M0.6 3.5H5.9" stroke="#fff" stroke-width="1.6"/></svg><svg class="a" style="left:217.0px;top:387.5px" width="8" height="8" viewBox="0 0 8 8"><path d="M0.5 0.5L7.5 7.5M7.5 0.5L0.5 7.5" stroke="#fff" stroke-width="0.9"/></svg><svg class="a" style="left:206.0px;top:387.5px" width="8" height="8" viewBox="0 0 8 8"><path d="M2.3 0.6H5.7V3.6H2.3Z" fill="none" stroke="#fff" stroke-width="1"/><path d="M0.3 4.3H7.7" stroke="#fff" stroke-width="1"/><path d="M4 4.3V7.8" stroke="#fff" stroke-width="1"/></svg><svg class="a" style="left:192.5px;top:387.5px" width="9" height="8" viewBox="0 0 9 8"><path d="M3.2 0.6H8.4V4.6H6.5" fill="none" stroke="#fff" stroke-width="1"/><path d="M0.6 3.1H5.9V7.4H0.6Z" fill="none" stroke="#fff" stroke-width="1"/><path d="M0.6 3.5H5.9" stroke="#fff" stroke-width="1.6"/></svg><svg class="a" style="left:966.5px;top:9.8px" width="8" height="8" viewBox="0 0 8 8"><path d="M2.3 0.6H5.7V3.6H2.3Z" fill="none" stroke="#fff" stroke-width="1"/><path d="M0.3 4.3H7.7" stroke="#fff" stroke-width="1"/><path d="M4 4.3V7.8" stroke="#fff" stroke-width="1"/></svg><svg class="a" style="left:953.0px;top:9.8px" width="9" height="8" viewBox="0 0 9 8"><path d="M3.2 0.6H8.4V4.6H6.5" fill="none" stroke="#fff" stroke-width="1"/><path d="M0.6 3.1H5.9V7.4H0.6Z" fill="none" stroke="#fff" stroke-width="1"/><path d="M0.6 3.5H5.9" stroke="#fff" stroke-width="1.6"/></svg><div class="a" style="left:8px;top:28px;width:2px;height:2px;background:#a4a4a4;box-shadow:1px 1px 0 #ffffff"></div><div class="a" style="left:8px;top:32px;width:2px;height:2px;background:#a4a4a4;box-shadow:1px 1px 0 #ffffff"></div><div class="a" style="left:8px;top:35px;width:2px;height:2px;background:#a4a4a4;box-shadow:1px 1px 0 #ffffff"></div><div class="a" style="left:8px;top:39px;width:2px;height:2px;background:#a4a4a4;box-shadow:1px 1px 0 #ffffff"></div><svg class="a" style="left:16.1px;top:27.7px" width="16" height="16" viewBox="0 0 16 16"><defs><linearGradient id="rfg" x1="0" y1="0" x2="0.3" y2="1"><stop offset="0" stop-color="#b0e0ff"/><stop offset="0.55" stop-color="#3aa8f4"/><stop offset="1" stop-color="#0a80e0"/></linearGradient></defs><path d="M8 3A5 5 0 1 0 12.33 5.5" fill="none" stroke="#1a6cc0" stroke-width="4.8"/><path d="M8 3A5 5 0 1 0 12.33 5.5" fill="none" stroke="url(#rfg)" stroke-width="3.6"/><path d="M8 1.2H15L8 8Z" fill="#2a88e0"/><path d="M8.8 2H13L8.8 6.2Z" fill="#90d4ff"/></svg><svg class="a" style="left:237px;top:24px" width="741" height="23" viewBox="0 0 741 23"><path d="M8.5 22.5 L28 4 Q30 2.5 33 2.5 H362.5 V22.5" fill="#fff" stroke="#b2c8e4" stroke-width="1"/><path d="M9.5 22.5 H362" stroke="#fff" stroke-width="1.2"/></svg><svg class="a" style="left:271.0px;top:28.5px" width="16" height="15" viewBox="0 0 16 15"><rect x="1.5" y="1.5" width="13" height="12" fill="#f4f8ff" stroke="#3a5ad8" stroke-width="1.2"/><path d="M3 3.6H13" stroke="#60b860" stroke-width="1"/><path d="M3 5.8H13M3 8H13M3 10.2H13M6 5V12.5" stroke="#8aa8e8" stroke-width="0.9"/><circle cx="1.5" cy="1.5" r="1.3" fill="#fff" stroke="#3a5ad8" stroke-width="0.9"/><circle cx="14.5" cy="1.5" r="1.3" fill="#fff" stroke="#3a5ad8" stroke-width="0.9"/><circle cx="1.5" cy="13.5" r="1.3" fill="#fff" stroke="#3a5ad8" stroke-width="0.9"/><circle cx="14.5" cy="13.5" r="1.3" fill="#fff" stroke="#3a5ad8" stroke-width="0.9"/></svg><div class="a" style="left:292.2px;top:27.5px;font-size:12.7px;line-height:16px;color:#000;white-space:pre">Sales Analysis  System Version 1 Orders Diagram</div><svg class="a" style="left:582.0px;top:32.0px" width="9" height="9" viewBox="0 0 9 9"><path d="M1 1L8 8M8 1L1 8" stroke="#000" stroke-width="1.3"/></svg><svg class="a" style="left:929.5px;top:30.5px" width="7" height="11" viewBox="0 0 7 11"><path d="M5.8 1L1 5.5L5.8 10Z" fill="none" stroke="#000" stroke-width="1"/></svg><svg class="a" style="left:946.5px;top:30.5px" width="7" height="11" viewBox="0 0 7 11"><path d="M1.2 1L6 5.5L1.2 10Z" fill="none" stroke="#000" stroke-width="1"/></svg><svg class="a" style="left:961.0px;top:31.0px" width="9" height="9" viewBox="0 0 9 9"><rect x="0.6" y="0.6" width="7.8" height="7.8" fill="#fff" stroke="#111" stroke-width="1.2"/><path d="M2.4 2.8H6.6M2.4 4.5H6.6M2.4 6.2H6.6" stroke="#111" stroke-width="0.9"/></svg><div class="a" style="left:241px;top:51px;width:2px;height:2px;background:#a4a4a4;box-shadow:1px 1px 0 #ffffff"></div><div class="a" style="left:241px;top:55px;width:2px;height:2px;background:#a4a4a4;box-shadow:1px 1px 0 #ffffff"></div><div class="a" style="left:241px;top:58px;width:2px;height:2px;background:#a4a4a4;box-shadow:1px 1px 0 #ffffff"></div><div class="a" style="left:241px;top:62px;width:2px;height:2px;background:#a4a4a4;box-shadow:1px 1px 0 #ffffff"></div><svg class="a" style="left:248.5px;top:50.0px" width="15" height="16" viewBox="0 0 15 16"><path d="M3.5 1.5H11L13.5 4V15.5H3.5Z" fill="#fff" stroke="#8a9aa0" stroke-width="0.9"/><rect x="0.5" y="2.5" width="8" height="8" rx="1" fill="#d01818"/><path d="M2.5 8.5Q4.5 6 4.8 3.8Q5.5 6.5 7 8.2Q4.5 7.3 2.5 8.5Z" fill="none" stroke="#fff" stroke-width="0.9"/></svg><svg class="a" style="left:270.5px;top:50.0px" width="17" height="16" viewBox="0 0 17 16"><rect x="4" y="0.8" width="9" height="5" fill="#f6f6f6" stroke="#aaa" stroke-width="0.8"/><rect x="0.5" y="5" width="16" height="7" rx="2" fill="#48a8e8"/><rect x="3.5" y="5.8" width="10" height="3" fill="#f8c820" stroke="#c89810" stroke-width="0.6"/><rect x="3.5" y="10" width="10" height="5.5" fill="#5a5a5a"/><rect x="5" y="11" width="7" height="4.5" fill="#e8e8e8"/></svg><div class="a" style="left:298px;top:51px;width:2px;height:2px;background:#a4a4a4;box-shadow:1px 1px 0 #ffffff"></div><div class="a" style="left:298px;top:55px;width:2px;height:2px;background:#a4a4a4;box-shadow:1px 1px 0 #ffffff"></div><div class="a" style="left:298px;top:58px;width:2px;height:2px;background:#a4a4a4;box-shadow:1px 1px 0 #ffffff"></div><div class="a" style="left:298px;top:62px;width:2px;height:2px;background:#a4a4a4;box-shadow:1px 1px 0 #ffffff"></div><svg class="a" style="left:307.0px;top:52.5px" width="15" height="14" viewBox="0 0 15 14"><path d="M3.5 3H9A3.8 3.8 0 0 1 9 10.6H5" fill="none" stroke="#b4b4b4" stroke-width="3.2"/><path d="M0.3 10.6L6 5.8V15Z" fill="#b4b4b4"/></svg><svg class="a" style="left:329.0px;top:52.5px" width="15" height="14" viewBox="0 0 15 14"><path d="M11.5 3H6A3.8 3.8 0 0 0 6 10.6H10" fill="none" stroke="#b4b4b4" stroke-width="3.2"/><path d="M14.7 10.6L9 5.8V15Z" fill="#b4b4b4"/></svg><div class="a" style="left:348.7px;top:48.5px;width:1px;height:19px;background:#c4c4c4;border-right:1px solid #fafafa"></div><svg class="a" style="left:356.5px;top:50.0px" width="14" height="16" viewBox="0 0 14 16"><path d="M5.5 1L8 10M11.5 1L6 10" stroke="#8090a8" stroke-width="1.3"/><circle cx="4.2" cy="12.3" r="2.6" fill="none" stroke="#2a62c0" stroke-width="1.8"/><circle cx="10" cy="12.3" r="2.6" fill="none" stroke="#2a62c0" stroke-width="1.8"/></svg><svg class="a" style="left:376.5px;top:50.5px" width="17" height="16" viewBox="0 0 17 16"><path d="M0.8 0.8H7.5L9.5 2.8V11.5H0.8Z" fill="#e4efff" stroke="#3a6ad0" stroke-width="1"/><path d="M6.5 4.5H13.5L16 7V15.2H6.5Z" fill="#e4efff" stroke="#3a6ad0" stroke-width="1"/></svg><svg class="a" style="left:398.0px;top:50.0px" width="17" height="16" viewBox="0 0 17 16"><rect x="0.8" y="2" width="11" height="13" rx="1.2" fill="#d89850" stroke="#9a6020" stroke-width="0.8"/><rect x="3.5" y="0.8" width="5.5" height="3" fill="#e8d8b0" stroke="#9a6020" stroke-width="0.6"/><rect x="7" y="7" width="9.2" height="8.5" fill="#f6f6f6" stroke="#666" stroke-width="0.9"/><path d="M8.8 9.5H14.5M8.8 11.5H14.5M8.8 13.5H14.5" stroke="#666" stroke-width="0.8"/></svg><div class="a" style="left:426px;top:51px;width:2px;height:2px;background:#a4a4a4;box-shadow:1px 1px 0 #ffffff"></div><div class="a" style="left:426px;top:55px;width:2px;height:2px;background:#a4a4a4;box-shadow:1px 1px 0 #ffffff"></div><div class="a" style="left:426px;top:58px;width:2px;height:2px;background:#a4a4a4;box-shadow:1px 1px 0 #ffffff"></div><div class="a" style="left:426px;top:62px;width:2px;height:2px;background:#a4a4a4;box-shadow:1px 1px 0 #ffffff"></div><svg class="a" style="left:434.5px;top:50.5px" width="13" height="16" viewBox="0 0 13 16"><path d="M3.5 15Q1 12 1.5 8.5L1.8 6.8Q2.5 6 3.2 6.8L3.5 8.5V3Q3.5 2 4.5 2Q5.5 2 5.5 3V7V1.8Q5.5 0.8 6.5 0.8Q7.5 0.8 7.5 1.8V7V2.5Q7.5 1.5 8.5 1.5Q9.5 1.5 9.5 2.5V7.5V4Q9.5 3 10.5 3Q11.5 3 11.5 4V10Q11.5 13.5 9.5 15Z" fill="#f2c090" stroke="#b07838" stroke-width="0.9"/></svg><svg class="a" style="left:456.5px;top:50.5px" width="13" height="16" viewBox="0 0 13 16"><path d="M3.5 15Q1 12 1.5 9L2 7.5Q2.7 7 3.3 7.6L4 9V2Q4 1 5 1Q6 1 6 2V7.5V6Q6 5 7 5Q8 5 8 6V8V6.5Q8 5.5 9 5.5Q10 5.5 10 6.5V8.5V7.3Q10 6.5 10.8 6.5Q11.8 6.5 11.8 7.5V10.5Q11.8 13.5 9.5 15Z" fill="#f2c090" stroke="#b07838" stroke-width="0.9"/></svg><div class="a" style="left:477.2px;top:48.5px;width:1px;height:19px;background:#c4c4c4;border-right:1px solid #fafafa"></div><svg class="a" style="left:483.5px;top:50.5px" width="15" height="15" viewBox="0 0 15 15"><circle cx="6" cy="6" r="5" fill="#cfe4fa" stroke="#7ea8d8" stroke-width="1.2"/><circle cx="4.8" cy="4.6" r="2" fill="#f4faff" opacity="0.8"/><path d="M9.5 9.5L13 13" stroke="#b07838" stroke-width="2.4" stroke-linecap="round"/><path d="M10.5 4V10M7.5 7H13.5" stroke="#2a9030" stroke-width="2.6"/><path d="M10.5 4.3V9.7M7.8 7H13.2" stroke="#5ac050" stroke-width="1.4"/></svg><svg class="a" style="left:505.5px;top:50.5px" width="15" height="15" viewBox="0 0 15 15"><circle cx="6" cy="6" r="5" fill="#cfe4fa" stroke="#7ea8d8" stroke-width="1.2"/><circle cx="4.8" cy="4.6" r="2" fill="#f4faff" opacity="0.8"/><path d="M9.5 9.5L13 13" stroke="#b07838" stroke-width="2.4" stroke-linecap="round"/><rect x="7.5" y="5.5" width="7" height="3.2" fill="#e02030"/></svg><svg class="a" style="left:527.5px;top:50.5px" width="15" height="15" viewBox="0 0 15 15"><circle cx="6" cy="6" r="5" fill="#cfe4fa" stroke="#7ea8d8" stroke-width="1.2"/><circle cx="4.8" cy="4.6" r="2" fill="#f4faff" opacity="0.8"/><path d="M9.5 9.5L13 13" stroke="#b07838" stroke-width="2.4" stroke-linecap="round"/></svg><div class="a" style="left:552.5px;top:56.5px;width:0;height:0;border-left:3.5px solid transparent;border-right:3.5px solid transparent;border-top:3.5px solid #222"></div><div class="a" style="left:564.0px;top:48.5px;width:1px;height:19px;background:#c4c4c4;border-right:1px solid #fafafa"></div><svg class="a" style="left:569.5px;top:51.0px" width="16" height="16" viewBox="0 0 16 16"><path d="M1.5 14.5L3 10.5L12.5 1.5L14.8 3.8L5.2 13Z" fill="#f0d050" stroke="#8a7020" stroke-width="0.8"/><path d="M12.5 1.5L14.8 3.8L15.5 3L13.3 0.8Z" fill="#e04040"/><path d="M1.5 14.5L2.3 12.3L3.8 13.6Z" fill="#222"/><path d="M3 15.3H14" stroke="#d8d8d8" stroke-width="1"/></svg><div class="a" style="left:595.4px;top:56.5px;width:0;height:0;border-left:3.5px solid transparent;border-right:3.5px solid transparent;border-top:3.5px solid #222"></div><svg class="a" style="left:608.0px;top:49.7px" width="16" height="16" viewBox="0 0 16 16"><defs><linearGradient id="rfg2" x1="0" y1="0" x2="0.3" y2="1"><stop offset="0" stop-color="#b0e0ff"/><stop offset="0.55" stop-color="#3aa8f4"/><stop offset="1" stop-color="#0a80e0"/></linearGradient></defs><path d="M8 3A5 5 0 1 0 12.33 5.5" fill="none" stroke="#1a6cc0" stroke-width="4.8"/><path d="M8 3A5 5 0 1 0 12.33 5.5" fill="none" stroke="url(#rfg2)" stroke-width="3.6"/><path d="M8 1.2H15L8 8Z" fill="#2a88e0"/><path d="M8.8 2H13L8.8 6.2Z" fill="#90d4ff"/></svg><div class="a" style="left:633.5px;top:56.5px;width:0;height:0;border-left:3.5px solid transparent;border-right:3.5px solid transparent;border-top:3.5px solid #222"></div><svg class="a" style="left:646.5px;top:51.5px" width="14" height="13" viewBox="0 0 14 13"><path d="M0.5 2.5H6.5M3.5 2.5V11H6" fill="none" stroke="#888" stroke-width="1.1"/><circle cx="9" cy="2.5" r="2" fill="#f4f4f4" stroke="#888" stroke-width="0.9"/><path d="M6 9.5L7.5 11L6 12.5" fill="none" stroke="#c02020" stroke-width="1"/><circle cx="10.8" cy="10.5" r="2.5" fill="#e01818"/></svg><div class="a" style="left:671.4px;top:56.5px;width:0;height:0;border-left:3.5px solid transparent;border-right:3.5px solid transparent;border-top:3.5px solid #222"></div><svg class="a" style="left:684.0px;top:50.5px" width="16" height="15" viewBox="0 0 16 15"><rect x="1.5" y="1.5" width="13" height="12" fill="#f4f8ff" stroke="#3a5ad8" stroke-width="1.2"/><path d="M3 3.6H13" stroke="#60b860" stroke-width="1"/><path d="M3 5.8H13M3 8H13M3 10.2H13M6 5V12.5" stroke="#8aa8e8" stroke-width="0.9"/><circle cx="1.5" cy="1.5" r="1.3" fill="#fff" stroke="#3a5ad8" stroke-width="0.9"/><circle cx="14.5" cy="1.5" r="1.3" fill="#fff" stroke="#3a5ad8" stroke-width="0.9"/><circle cx="1.5" cy="13.5" r="1.3" fill="#fff" stroke="#3a5ad8" stroke-width="0.9"/><circle cx="14.5" cy="13.5" r="1.3" fill="#fff" stroke="#3a5ad8" stroke-width="0.9"/></svg><svg class="a" style="left:706.5px;top:50.5px" width="15" height="16" viewBox="0 0 15 16"><path d="M0.5 0.5H7V7H0.5Z" fill="#6ab8f0" opacity="0.8"/><rect x="3" y="3" width="8.5" height="8.5" fill="none" stroke="#000" stroke-width="1.5" stroke-dasharray="1.8 1"/><path d="M6 6H14L14.5 6.5V15H6Z" fill="#d8eefc" stroke="#a8d4f0" stroke-width="0.6"/></svg><div class="a" style="left:744px;top:51px;width:2px;height:2px;background:#a4a4a4;box-shadow:1px 1px 0 #ffffff"></div><div class="a" style="left:744px;top:55px;width:2px;height:2px;background:#a4a4a4;box-shadow:1px 1px 0 #ffffff"></div><div class="a" style="left:744px;top:58px;width:2px;height:2px;background:#a4a4a4;box-shadow:1px 1px 0 #ffffff"></div><div class="a" style="left:744px;top:62px;width:2px;height:2px;background:#a4a4a4;box-shadow:1px 1px 0 #ffffff"></div><svg class="a" style="left:752.5px;top:50.5px" width="15" height="15" viewBox="0 0 15 15"><path d="M1.5 0.5H9V5H1.5Z" fill="#6ab8f0"/><path d="M4 3H11.5V8H4Z" fill="#8ccaf4"/><path d="M6.5 6H14.5V12.5H6.5Z" fill="#d8eefc" stroke="#a8d4f0" stroke-width="0.6"/><path d="M0.5 7.5H3.5M2 7.5V13.5M0.5 13.5H3.5" stroke="#000" stroke-width="1.1"/><path d="M5 13.5H6.5M8 13.5H9.5M11 13.5H12.5M13.5 13.5H15" stroke="#000" stroke-width="1.6"/></svg><svg class="a" style="left:773.5px;top:52.5px" width="17" height="11" viewBox="0 0 17 11"><ellipse cx="5.5" cy="5.5" rx="5" ry="5" fill="#c4d8f0" stroke="#9ab8dc" stroke-width="0.8"/><ellipse cx="11.5" cy="5.5" rx="5" ry="5" fill="#c4d8f0" stroke="#9ab8dc" stroke-width="0.8" opacity="0.85"/><ellipse cx="8.5" cy="5.5" rx="2" ry="4.3" fill="#dce8f8" stroke="#3a5ad8" stroke-width="1"/></svg><svg class="a" style="left:797.0px;top:51.0px" width="14" height="14" viewBox="0 0 14 14"><defs><radialGradient id="sph" cx="0.35" cy="0.3" r="0.8"><stop offset="0" stop-color="#c8e4ff"/><stop offset="0.5" stop-color="#5aa0ea"/><stop offset="1" stop-color="#2a6ac8"/></radialGradient></defs><circle cx="7" cy="7" r="6.5" fill="url(#sph)"/><path d="M1.5 9Q5 6 7 8.5Q10 11 13 6" stroke="#e8f4ff" stroke-width="1" fill="none" opacity="0.6"/></svg><svg class="a" style="left:817.5px;top:50.0px" width="17" height="16" viewBox="0 0 17 16"><path d="M8.5 7.5L1.8 14.2" stroke="#b88a18" stroke-width="3.6" stroke-linecap="round"/><path d="M8.5 7.5L1.8 14.2" stroke="#f0c038" stroke-width="2.2" stroke-linecap="round"/><path d="M3.2 11.2L5.2 13.2M5 9.5L6.8 11.3" stroke="#c89420" stroke-width="1.8"/><ellipse cx="11.2" cy="5" rx="5" ry="4.4" transform="rotate(-35 11.2 5)" fill="#f4c840" stroke="#b88a18" stroke-width="0.9"/><ellipse cx="12" cy="4.2" rx="1.8" ry="1.2" transform="rotate(-35 12 4.2)" fill="#fff4c0" stroke="#b88a18" stroke-width="0.5"/><circle cx="12.5" cy="12" r="3.7" fill="#3aa838" stroke="#1a7018" stroke-width="0.6"/><path d="M12.5 10V14M10.5 12H14.5" stroke="#fff" stroke-width="1.4"/></svg><svg class="a" style="left:840.5px;top:50.5px" width="17" height="16" viewBox="0 0 17 16"><rect x="0.8" y="0.8" width="13" height="12" fill="#f4f8ff" stroke="#4a7ad8" stroke-width="1"/><path d="M2 2.8H13" stroke="#60b860" stroke-width="1"/><path d="M2 5H13M2 7.2H13M2 9.4H13M5 4.5V12" stroke="#8aa8e8" stroke-width="0.9"/><circle cx="12.5" cy="12" r="3.6" fill="#3aa838" stroke="#1a7018" stroke-width="0.6"/><path d="M12.5 10V14M10.5 12H14.5" stroke="#fff" stroke-width="1.4"/></svg><div class="a" style="left:865.5px;top:56.5px;width:0;height:0;border-left:3.5px solid transparent;border-right:3.5px solid transparent;border-top:3.5px solid #222"></div><svg class="a" style="left:877.5px;top:50.5px" width="17" height="15" viewBox="0 0 17 15"><rect x="0.8" y="0.8" width="5" height="13.4" fill="#f4f8ff" stroke="#3a6ad0" stroke-width="0.9"/><rect x="11.2" y="0.8" width="5" height="13.4" fill="#f4f8ff" stroke="#3a6ad0" stroke-width="0.9"/><path d="M2 3H5M2 5H5M2 7H5M2 9H5M12.5 3H15.5M12.5 5H15.5M12.5 7H15.5M12.5 9H15.5" stroke="#90b0e0" stroke-width="0.7"/><path d="M4 10.5L8 7L10 6L13 4.5" stroke="#3aa838" stroke-width="2.2" fill="none"/></svg><svg class="a" style="left:900.5px;top:50.5px" width="16" height="16" viewBox="0 0 16 16"><circle cx="7" cy="7" r="5.8" fill="#fff" stroke="#d83838" stroke-width="2.2"/><path d="M3.5 3.5A5 5 0 0 1 10.5 3.5" stroke="#f8a0a0" stroke-width="0.8" fill="none"/><circle cx="12" cy="11.8" r="3.7" fill="#3aa838" stroke="#1a7018" stroke-width="0.6"/><path d="M12 9.8V13.8M10 11.8H14" stroke="#fff" stroke-width="1.4"/></svg><svg class="a" style="left:922.8px;top:50.7px" width="14" height="14" viewBox="0 0 14 14"><circle cx="7" cy="7" r="5.8" fill="#fff" stroke="#d83838" stroke-width="2.2"/><path d="M3.5 3.5A5 5 0 0 1 10.5 3.5" stroke="#f8a0a0" stroke-width="0.8" fill="none"/><path d="M3.5 5.5H10.5M8.5 3.8L10.5 5.5" stroke="#1a8020" stroke-width="1.6" fill="none"/><path d="M3.5 8.5H10.5M5.5 10.2L3.5 8.5" stroke="#c01818" stroke-width="1.6" fill="none"/></svg><svg class="a" style="left:945.0px;top:50.7px" width="14" height="14" viewBox="0 0 14 14"><circle cx="7" cy="7" r="5.8" fill="#fff" stroke="#d83838" stroke-width="2.2"/><path d="M3.5 3.5A5 5 0 0 1 10.5 3.5" stroke="#f8a0a0" stroke-width="0.8" fill="none"/></svg><svg class="a" style="left:968.5px;top:48.5px" width="9" height="8" viewBox="0 0 9 8"><path d="M1 1L4 4L1 7M5 1L8 4L5 7" fill="none" stroke="#5a7a9a" stroke-width="1.3"/></svg><div class="a" style="left:961px;top:70px;width:16px;height:601px;background:#ececec;border-left:1px solid #9eacbc;border-right:1px solid #7d8ca2;border-top:1px solid #98a6b4"></div><div class="a" style="left:977px;top:70px;width:1px;height:601px;background:#fafafa"></div><div class="a" style="left:962px;top:71px;width:14px;height:15.5px;background:#f2f2f2;border-bottom:1px solid #8ea6c6"><div class="a" style="left:3px;top:4.6px;width:0;height:0;border-left:4.2px solid transparent;border-right:4.2px solid transparent;border-bottom:4.6px solid #222"></div></div><div class="a" style="left:962px;top:654px;width:14px;height:16px;background:#f2f2f2;border-top:1px solid #8ea6c6;border-bottom:1px solid #8ea6c6"><div class="a" style="left:3px;top:5.5px;width:0;height:0;border-left:4.2px solid transparent;border-right:4.2px solid transparent;border-top:4.6px solid #222"></div></div><div class="a" style="left:961px;top:156px;width:16px;height:323px;border:1px solid #6f94c8;border-left-color:#5a80c8;border-right-color:#6a7c94;background:linear-gradient(90deg,#d4e2f4,#ffffff 38%,#dde8f5 60%,#bcd2ea)"></div><div class="a" style="left:965px;top:315.5px;width:8.5px;height:5px;border-top:1px solid #5a78b0;border-bottom:1px solid #5a78b0"><div style="margin-top:1px;height:1px;background:#5a78b0"></div></div><div class="a" style="left:237px;top:670px;width:724px;height:17px;background:#ececec;border-top:1px solid #b8c4d0"></div><div class="a" style="left:420px;top:670px;width:397px;height:15.5px;border:1px solid #6f94c8;border-top-color:#5a80c8;border-bottom-color:#6a7c94;background:linear-gradient(#d4e2f4,#ffffff 38%,#dde8f5 60%,#bcd2ea)"></div><div class="a" style="left:640.5px;top:674px;width:5px;height:8px;border-left:1px solid #5a78b0;border-right:1px solid #5a78b0"><div style="margin-left:1px;width:1px;height:8px;background:#5a78b0"></div></div><!-- overview content -->
<div class="a" style="left:4px;top:460px;width:226px;height:167px;background:#c1c6cd"></div>
<div class="a" style="left:73.3px;top:481.2px;width:115.7px;height:95.4px;border:1.2px solid #000;background:#e6f2fa"></div>
<svg class="a" style="left:0;top:0" width="240" height="705" viewBox="0 0 240 705"><g stroke="#333" stroke-width="1" fill="none"><path d="M131.5 492.5H135.5V568.5H129.5M135.5 529.5H140"/><path d="M72 528.5H75.5V548.5H80.5"/></g></svg>
<div class="a ovb" style="left:80.2px;top:481.7px;width:51.5px;height:32px;background:linear-gradient(#5aa4e6,#4180b8 25%,#3c78b0)"></div>
<div class="a ovb" style="left:80.2px;top:518.4px;width:51.5px;height:31.1px;background:linear-gradient(#64e464,#4ab24a 25%,#46ac46)"></div>
<div class="a ovb" style="left:24px;top:518.4px;width:48px;height:31.1px;background:linear-gradient(#6aa8a8,#5c9494 25%,#5a9090)"></div>
<div class="a ovb" style="left:140.2px;top:518.4px;width:46.4px;height:31.1px;background:linear-gradient(#84e8e8,#6ab2b2 25%,#66aeae)"></div>
<div class="a ovb" style="left:82px;top:557.3px;width:48px;height:27.5px;background:linear-gradient(#84e8e8,#6ab2b2 25%,#66aeae 70%,#5c9696 70%,#5a9292)"></div>
<svg class="a" style="left:0;top:0" width="996" height="705" viewBox="0 0 996 705"><path d="M0 705 L0 671.5 L4.5 671.5 L7.0 670.5 L7.0 670.5 L11.5 670.0 L17.3 669.3 L24.0 668.5 L31.6 667.6 L39.8 666.6 L48.5 665.5 L57.5 664.5 L66.5 663.4 L75.5 662.4 L84.2 661.5 L92.4 660.7 L100.0 660.0 L107.2 659.4 L114.2 658.9 L121.1 658.4 L128.0 658.0 L134.8 657.6 L141.4 657.2 L148.0 656.9 L154.6 656.6 L161.0 656.3 L167.4 656.0 L173.7 655.8 L180.0 655.5 L186.2 655.2 L192.5 655.0 L198.7 654.7 L204.8 654.5 L210.9 654.3 L216.9 654.1 L222.8 654.0 L228.5 653.8 L234.1 653.7 L239.6 653.6 L244.9 653.5 L250.0 653.5 L254.8 653.5 L259.1 653.5 L263.2 653.5 L267.0 653.6 L270.7 653.7 L274.4 653.8 L278.1 653.9 L281.9 654.1 L285.9 654.3 L290.2 654.5 L294.8 654.7 L300.0 655.0 L305.7 655.3 L312.1 655.7 L318.8 656.1 L325.9 656.6 L333.2 657.0 L340.6 657.5 L348.0 658.0 L355.2 658.6 L362.1 659.0 L368.6 659.5 L374.6 660.0 L380.0 660.4 L384.7 660.8 L388.7 661.1 L392.3 661.5 L395.5 661.8 L398.4 662.1 L401.1 662.4 L403.8 662.7 L406.5 663.0 L409.4 663.4 L412.5 663.7 L416.0 664.1 L420.0 664.5 L424.5 664.9 L429.3 665.4 L434.5 666.0 L439.9 666.5 L445.5 667.1 L451.1 667.6 L456.8 668.2 L462.3 668.8 L467.7 669.3 L472.8 669.8 L477.6 670.2 L482.0 670.6 L485.8 670.9 L489.0 671.2 L491.7 671.4 L494.1 671.5 L496.4 671.7 L498.6 671.8 L501.0 671.9 L503.6 672.1 L506.7 672.3 L510.4 672.5 L514.7 672.8 L520.0 673.2 L526.2 673.7 L533.3 674.2 L541.1 674.9 L549.5 675.5 L558.3 676.2 L567.4 677.0 L576.6 677.7 L585.9 678.4 L595.0 679.1 L603.8 679.8 L612.2 680.4 L620.0 681.0 L627.4 681.5 L634.7 682.1 L641.9 682.6 L648.9 683.1 L655.8 683.5 L662.5 684.0 L669.1 684.4 L675.6 684.8 L681.9 685.2 L688.1 685.5 L694.1 685.8 L700.0 686.0 L705.7 686.2 L711.0 686.3 L716.2 686.4 L721.1 686.5 L725.9 686.5 L730.6 686.5 L735.3 686.5 L740.0 686.4 L744.8 686.4 L749.7 686.3 L754.7 686.1 L760.0 686.0 L765.5 685.8 L771.1 685.6 L776.8 685.4 L782.6 685.1 L788.5 684.8 L794.4 684.5 L800.3 684.1 L806.3 683.8 L812.3 683.5 L818.2 683.1 L824.1 682.8 L830.0 682.5 L835.9 682.2 L841.8 681.9 L847.7 681.7 L853.7 681.4 L859.7 681.1 L865.6 680.9 L871.5 680.6 L877.4 680.3 L883.2 680.0 L888.9 679.7 L894.5 679.4 L900.0 679.0 L905.4 678.6 L910.9 678.2 L916.4 677.7 L921.9 677.2 L927.3 676.7 L932.6 676.2 L937.7 675.7 L942.7 675.2 L947.4 674.7 L951.9 674.3 L956.1 673.9 L960.0 673.5 L963.6 673.2 L967.0 672.8 L970.1 672.5 L973.0 672.2 L975.7 671.9 L978.2 671.7 L980.5 671.4 L982.6 671.2 L984.5 671.0 L986.2 670.8 L987.7 670.6 L989.0 670.5 L996 672 L996 705Z" fill="#fff"/><polygon points="7.0,670.5 11.5,670.0 17.3,669.3 24.0,668.5 31.6,667.6 39.8,666.6 48.5,665.5 57.5,664.5 66.5,663.4 75.5,662.4 84.2,661.5 92.4,660.7 100.0,660.0 107.2,659.4 114.2,658.9 121.1,658.4 128.0,658.0 134.8,657.6 141.4,657.2 148.0,656.9 154.6,656.6 161.0,656.3 167.4,656.0 173.7,655.8 180.0,655.5 186.2,655.2 192.5,655.0 198.7,654.7 204.8,654.5 210.9,654.3 216.9,654.1 222.8,654.0 228.5,653.8 234.1,653.7 239.6,653.6 244.9,653.5 250.0,653.5 254.8,653.5 259.1,653.5 263.2,653.5 267.0,653.6 270.7,653.7 274.4,653.8 278.1,653.9 281.9,654.1 285.9,654.3 290.2,654.5 294.8,654.7 300.0,655.0 305.7,655.3 312.1,655.7 318.8,656.1 325.9,656.6 333.2,657.0 340.6,657.5 348.0,658.0 355.2,658.6 362.1,659.0 368.6,659.5 374.6,660.0 380.0,660.4 384.7,660.8 388.7,661.1 392.3,661.5 395.5,661.8 398.4,662.1 401.1,662.4 403.8,662.7 406.5,663.0 409.4,663.4 412.5,663.7 416.0,664.1 420.0,664.5 424.5,664.9 429.3,665.4 434.5,666.0 439.9,666.5 445.5,667.1 451.1,667.6 456.8,668.2 462.3,668.8 467.7,669.3 472.8,669.8 477.6,670.2 482.0,670.6 485.8,670.9 489.0,671.2 491.7,671.4 494.1,671.5 496.4,671.7 498.6,671.8 501.0,671.9 503.6,672.1 506.7,672.3 510.4,672.5 514.7,672.8 520.0,673.2 526.2,673.7 533.3,674.2 541.1,674.9 549.5,675.5 558.3,676.2 567.4,677.0 576.6,677.7 585.9,678.4 595.0,679.1 603.8,679.8 612.2,680.4 620.0,681.0 627.4,681.5 634.7,682.1 641.9,682.6 648.9,683.1 655.8,683.5 662.5,684.0 669.1,684.4 675.6,684.8 681.9,685.2 688.1,685.5 694.1,685.8 700.0,686.0 705.7,686.2 711.0,686.3 716.2,686.4 721.1,686.5 725.9,686.5 730.6,686.5 735.3,686.5 740.0,686.4 744.8,686.4 749.7,686.3 754.7,686.1 760.0,686.0 765.5,685.8 771.1,685.6 776.8,685.4 782.6,685.1 788.5,684.8 794.4,684.5 800.3,684.1 806.3,683.8 812.3,683.5 818.2,683.1 824.1,682.8 830.0,682.5 835.9,682.2 841.8,681.9 847.7,681.7 853.7,681.4 859.7,681.1 865.6,680.9 871.5,680.6 877.4,680.3 883.2,680.0 888.9,679.7 894.5,679.4 900.0,679.0 905.4,678.6 910.9,678.2 916.4,677.7 921.9,677.2 927.3,676.7 932.6,676.2 937.7,675.7 942.7,675.2 947.4,674.7 951.9,674.3 956.1,673.9 960.0,673.5 963.6,673.2 967.0,672.8 970.1,672.5 973.0,672.2 975.7,671.9 978.2,671.7 980.5,671.4 982.6,671.2 984.5,671.0 986.2,670.8 987.7,670.6 989.0,670.5 989,668 989,675.5 986,679 982.0,680.0 981.1,680.1 980.0,680.3 978.9,680.5 977.7,680.7 976.3,680.9 974.8,681.1 973.0,681.4 971.0,681.7 968.7,682.0 966.1,682.3 963.2,682.6 960.0,683.0 956.5,683.4 952.9,683.8 949.1,684.3 945.0,684.7 940.7,685.2 936.1,685.8 931.2,686.3 925.9,686.8 920.1,687.4 913.9,687.9 907.2,688.5 900.0,689.0 892.0,689.6 883.0,690.2 873.3,690.8 863.0,691.5 852.2,692.1 841.2,692.8 830.2,693.5 819.3,694.1 808.6,694.6 798.4,695.2 788.8,695.6 780.0,696.0 771.9,696.3 764.4,696.6 757.2,696.8 750.4,697.0 743.8,697.1 737.5,697.2 731.3,697.3 725.2,697.3 719.1,697.3 712.9,697.2 706.5,697.1 700.0,697.0 693.4,696.8 686.9,696.6 680.5,696.3 674.1,696.0 667.7,695.6 661.2,695.2 654.8,694.7 648.1,694.3 641.4,693.7 634.5,693.2 627.4,692.6 620.0,692.0 612.2,691.3 603.8,690.6 595.0,689.7 585.9,688.8 576.7,687.9 567.5,686.9 558.4,686.0 549.6,685.1 541.2,684.2 533.4,683.4 526.3,682.6 520.0,682.0 514.6,681.5 510.1,681.0 506.2,680.6 503.0,680.3 500.1,680.0 497.5,679.7 495.0,679.4 492.6,679.2 490.0,678.9 487.1,678.7 483.8,678.3 480.0,678.0 475.6,677.6 470.9,677.2 465.9,676.8 460.7,676.4 455.4,675.9 450.0,675.5 444.6,675.1 439.3,674.6 434.1,674.2 429.1,673.8 424.4,673.4 420.0,673.0 416.1,672.6 412.6,672.3 409.5,671.9 406.7,671.6 403.9,671.3 401.2,671.0 398.5,670.7 395.6,670.3 392.3,670.0 388.8,669.6 384.7,669.2 380.0,668.8 374.6,668.3 368.6,667.8 362.1,667.2 355.2,666.7 348.0,666.1 340.6,665.4 333.2,664.8 325.9,664.3 318.8,663.7 312.1,663.3 305.7,662.8 300.0,662.5 294.8,662.2 290.2,662.0 285.9,661.8 281.9,661.7 278.1,661.6 274.4,661.5 270.7,661.5 267.0,661.5 263.2,661.5 259.1,661.5 254.8,661.5 250.0,661.6 244.9,661.7 239.6,661.8 234.1,661.9 228.5,662.0 222.8,662.1 216.9,662.3 210.9,662.5 204.8,662.8 198.7,663.0 192.5,663.3 186.2,663.6 180.0,664.0 173.7,664.4 167.4,664.8 161.0,665.3 154.6,665.8 148.0,666.4 141.4,666.9 134.8,667.5 128.0,668.1 121.1,668.7 114.2,669.4 107.2,670.0 100.0,670.7 92.4,671.4 84.2,672.2 75.5,673.1 66.5,674.0 57.5,674.9 48.5,675.8 39.8,676.7 31.6,677.5 24.0,678.3 17.3,679.0 11.5,679.5 7.0,680.0 9,680.5 7,677" fill="#d4d4d4"/></svg></body></html>
